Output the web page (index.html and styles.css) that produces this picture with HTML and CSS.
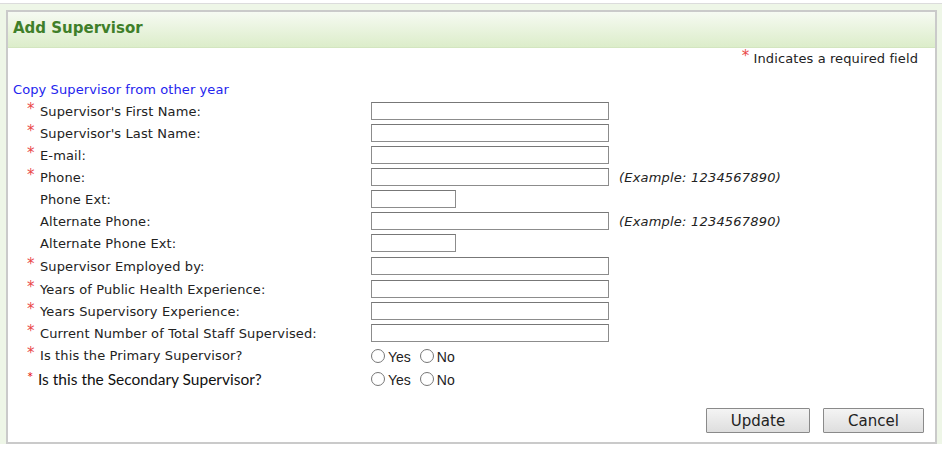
FILE: index.html
```html
<!DOCTYPE html>
<html lang="en">
<head>
    <meta charset="UTF-8">
    <title>Add Supervisor</title>
    <link rel="stylesheet" href="styles.css">
</head>
<body>
    <div class="page">
        <div class="panel">
            <div class="panel-head">Add Supervisor</div>
            <div class="panel-body">
                <p class="req-note"><span class="req">*</span> Indicates a required field</p>
                <a class="copy-link" href="#">Copy Supervisor from other year</a>

                <div class="form">
                    <div class="row">
                        <label><span class="req">*</span>Supervisor's First Name:</label>
                        <div class="field"><input type="text" class="txt"></div>
                    </div>
                    <div class="row">
                        <label><span class="req">*</span>Supervisor's Last Name:</label>
                        <div class="field"><input type="text" class="txt"></div>
                    </div>
                    <div class="row">
                        <label><span class="req">*</span>E-mail:</label>
                        <div class="field"><input type="text" class="txt"></div>
                    </div>
                    <div class="row">
                        <label><span class="req">*</span>Phone:</label>
                        <div class="field"><input type="text" class="txt"><span class="hint">(Example: 1234567890)</span></div>
                    </div>
                    <div class="row">
                        <label><span class="req"></span>Phone Ext:</label>
                        <div class="field"><input type="text" class="txt short"></div>
                    </div>
                    <div class="row">
                        <label><span class="req"></span>Alternate Phone:</label>
                        <div class="field"><input type="text" class="txt"><span class="hint">(Example: 1234567890)</span></div>
                    </div>
                    <div class="row">
                        <label><span class="req"></span>Alternate Phone Ext:</label>
                        <div class="field"><input type="text" class="txt short"></div>
                    </div>
                    <div class="row step">
                        <label><span class="req">*</span>Supervisor Employed by:</label>
                        <div class="field"><input type="text" class="txt"></div>
                    </div>
                    <div class="row step">
                        <label><span class="req">*</span>Years of Public Health Experience:</label>
                        <div class="field"><input type="text" class="txt"></div>
                    </div>
                    <div class="row">
                        <label><span class="req">*</span>Years Supervisory Experience:</label>
                        <div class="field"><input type="text" class="txt"></div>
                    </div>
                    <div class="row">
                        <label><span class="req">*</span>Current Number of Total Staff Supervised:</label>
                        <div class="field"><input type="text" class="txt"></div>
                    </div>
                    <div class="row radio-row">
                        <label><span class="req">*</span>Is this the Primary Supervisor?</label>
                        <div class="field">
                            <input type="radio" name="primary" class="radio"><span class="opt">Yes</span>
                            <input type="radio" name="primary" class="radio"><span class="opt">No</span>
                        </div>
                    </div>
                    <div class="row radio-row">
                        <label class="alt"><span class="req">*</span>Is this the Secondary Supervisor?</label>
                        <div class="field">
                            <input type="radio" name="secondary" class="radio"><span class="opt">Yes</span>
                            <input type="radio" name="secondary" class="radio"><span class="opt">No</span>
                        </div>
                    </div>
                </div>

                <div class="actions">
                    <button type="button" class="btn-update">Update</button>
                    <button type="button">Cancel</button>
                </div>
            </div>
        </div>
    </div>
</body>
</html>
```

FILE: styles.css
```css
body {
    margin: 0;
    background-color: #fff;
    font-family: "DejaVu Sans", Verdana, sans-serif;
    font-size: 13px;
    color: #222;
}
.page {
    margin-top: 3px;
    border-top: 1px solid #dcdcdc;
    background-color: #eef6e7;
    padding: 6px 5px 0 6px;
}
.panel {
    background-color: #fff;
    border: 2px solid #cacaca;
    height: 430px;
}
.panel-head {
    height: 35px;
    line-height: 33px;
    padding-left: 5px;
    font-weight: bold;
    font-size: 15px;
    color: #3f7f2a;
    background: linear-gradient(to bottom, #f6faf2, #dcedca);
    border-bottom: 1px solid #d3e5c0;
}
.panel-body {
    padding: 0 11px 0 5px;
}
.req {
    color: #ea4848;
    display: inline-block;
    width: 13px;
    font-size: 15px;
    line-height: 10px;
    vertical-align: 2px;
}
.req-note {
    margin: 3px 0 0;
    text-align: right;
    line-height: 16px;
    padding-right: 6px;
    letter-spacing: 0.1px;
}
.req-note .req {
    width: auto;
}
.copy-link {
    display: block;
    margin-top: 15px;
    line-height: 16px;
    color: #2424ee;
    text-decoration: none;
    letter-spacing: 0.1px;
}
.form {
    margin-top: 2px;
}
.row {
    display: grid;
    grid-template-columns: 358px 1fr;
    align-items: center;
    height: 22px;
}
.row.step {
    margin-top: 1px;
}
.row.radio-row {
    height: 23px;
}
.row label {
    padding-left: 14px;
    letter-spacing: 0.12px;
}
.row label.alt {
    font-family: Lato, "Liberation Sans", sans-serif;
    font-size: 15.5px;
    letter-spacing: 0;
    color: #111;
}
.row label.alt .req {
    width: 11px;
    font-size: 15px;
    color: #e61010;
}
.field {
    display: flex;
    align-items: center;
}
.txt {
    box-sizing: border-box;
    width: 238px;
    height: 18px;
    margin: 0;
    border: 1px solid #8c8c8c;
    border-top-color: #777;
    padding: 0 3px;
    font-family: inherit;
    font-size: 12px;
}
.txt.short {
    width: 85px;
}
.hint {
    margin-left: 10px;
    font-style: italic;
    letter-spacing: 0.2px;
}
.radio {
    appearance: none;
    box-sizing: border-box;
    width: 14px;
    height: 14px;
    margin: 0 3px 0 0;
    border: 1px solid #777;
    border-radius: 50%;
    background-color: #fff;
}
.opt {
    font-family: "Liberation Sans", Arial, sans-serif;
    font-size: 14px;
    margin-right: 9px;
    margin-top: 2px;
}
.actions {
    display: flex;
    justify-content: flex-end;
    gap: 13px;
    margin-top: 18px;
}
button {
    width: 101px;
    height: 25px;
    padding: 0;
    border: 1px solid #8a8a8a;
    border-radius: 1px;
    background: linear-gradient(to bottom, #f4f4f4, #dedede);
    font-family: "DejaVu Sans", Verdana, sans-serif;
    font-size: 15px;
    color: #222;
}
.btn-update {
    width: 104px;
}
```
